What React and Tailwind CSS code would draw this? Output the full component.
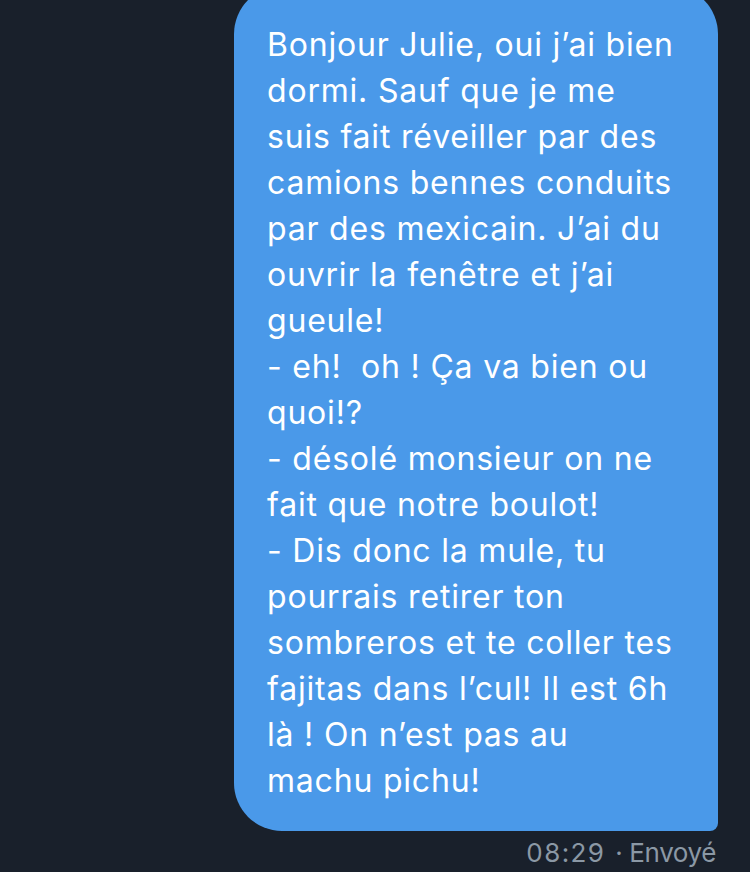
export default function App() {
  const lines = [
    'Bonjour Julie, oui j’ai bien',
    'dormi. Sauf que je me',
    'suis fait réveiller par des',
    'camions bennes conduits',
    'par des mexicain. J’ai du',
    'ouvrir la fenêtre et j’ai',
    'gueule!',
    '- eh!\u00a0 oh ! Ça va bien ou',
    'quoi!?',
    '- désolé monsieur on ne',
    'fait que notre boulot!',
    '- Dis donc la mule, tu',
    'pourrais retirer ton',
    'sombreros et te coller tes',
    'fajitas dans l’cul! Il est 6h',
    'là ! On n’est pas au',
    'machu pichu!',
  ];

  return (
    <div className="w-[750px] h-[872px] overflow-hidden bg-[#19202b] font-['Inter','Noto_Sans',sans-serif]">
      <div className="flex flex-col items-end pr-[32px]">
        <div className="-mt-[14px] w-[484px] bg-[#4a99e9] rounded-t-[48px] rounded-bl-[48px] rounded-br-[8px] pl-[33px] pr-[10px] pt-[36px] pb-[27px]">
          <p className="text-white text-[32px] leading-[46px] tracking-[0.8px] whitespace-nowrap">
            {lines.map((l, i) => (
              <span key={i} className="block">{l}</span>
            ))}
          </p>
        </div>
        <div className="mt-[6px] pr-[2px] flex items-center text-[26px] leading-[32px] text-[#8b98a5]">
          <span className="tracking-[1.4px]">08:29</span>
          <span className="ml-[10px] tracking-[-0.4px]">· Envoyé</span>
        </div>
      </div>
    </div>
  );
}
